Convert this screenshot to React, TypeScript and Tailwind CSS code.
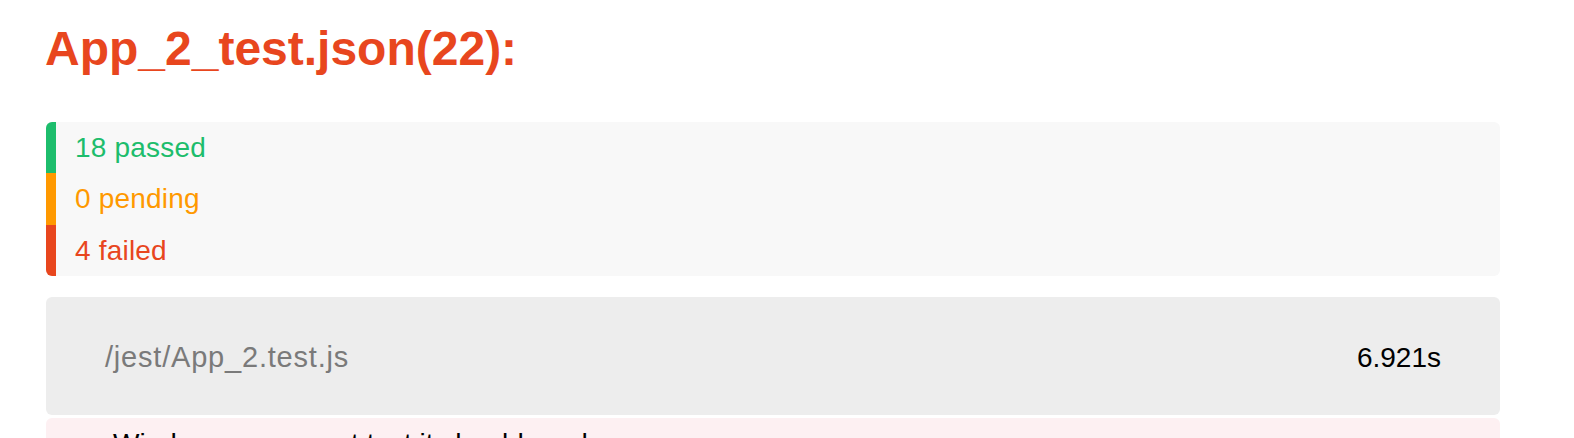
export default function App() {
  const font = { fontFamily: '"Liberation Sans", Arial, sans-serif' };
  return (
    <div className="h-[438px] overflow-hidden bg-white pl-[46px] pr-[74px]" style={font}>
      <h1 className="-ml-px pt-[25px] text-[48px] font-bold leading-[47px] text-[#e8461e]">
        App_2_test.json(22):
      </h1>
      <div className="mt-[50px] flex overflow-hidden rounded-[6px] bg-[#f8f8f8]">
        <div className="flex w-[10px] flex-col">
          <div className="h-[51px] bg-[#1dbd6c]" />
          <div className="h-[52px] bg-[#ff9900]" />
          <div className="h-[51px] bg-[#e8461e]" />
        </div>
        <div className="flex flex-col pl-[19px] text-[28px] tracking-[0.2px]">
          <div className="h-[51px] leading-[51px] text-[#1dbd6c]">18 passed</div>
          <div className="h-[52px] leading-[52px] text-[#ff9900]">0 pending</div>
          <div className="h-[51px] leading-[51px] text-[#e8461e]">4 failed</div>
        </div>
      </div>
      <div className="mt-[21px] flex h-[118px] items-center justify-between rounded-[6px] bg-[#ededed] px-[59px] pt-[4px] text-[28px]">
        <span className="text-[29px] tracking-[0.8px] text-[#7a7a7a]">/jest/App_2.test.js</span>
        <span className="text-black">6.921s</span>
      </div>
      <div className="mt-[3px] h-[60px] rounded-t-[6px] bg-[#fdf0f2] pl-[67px] pt-[10px] text-[28px] leading-[32px] text-black">
        Window component test it should render
      </div>
    </div>
  );
}
